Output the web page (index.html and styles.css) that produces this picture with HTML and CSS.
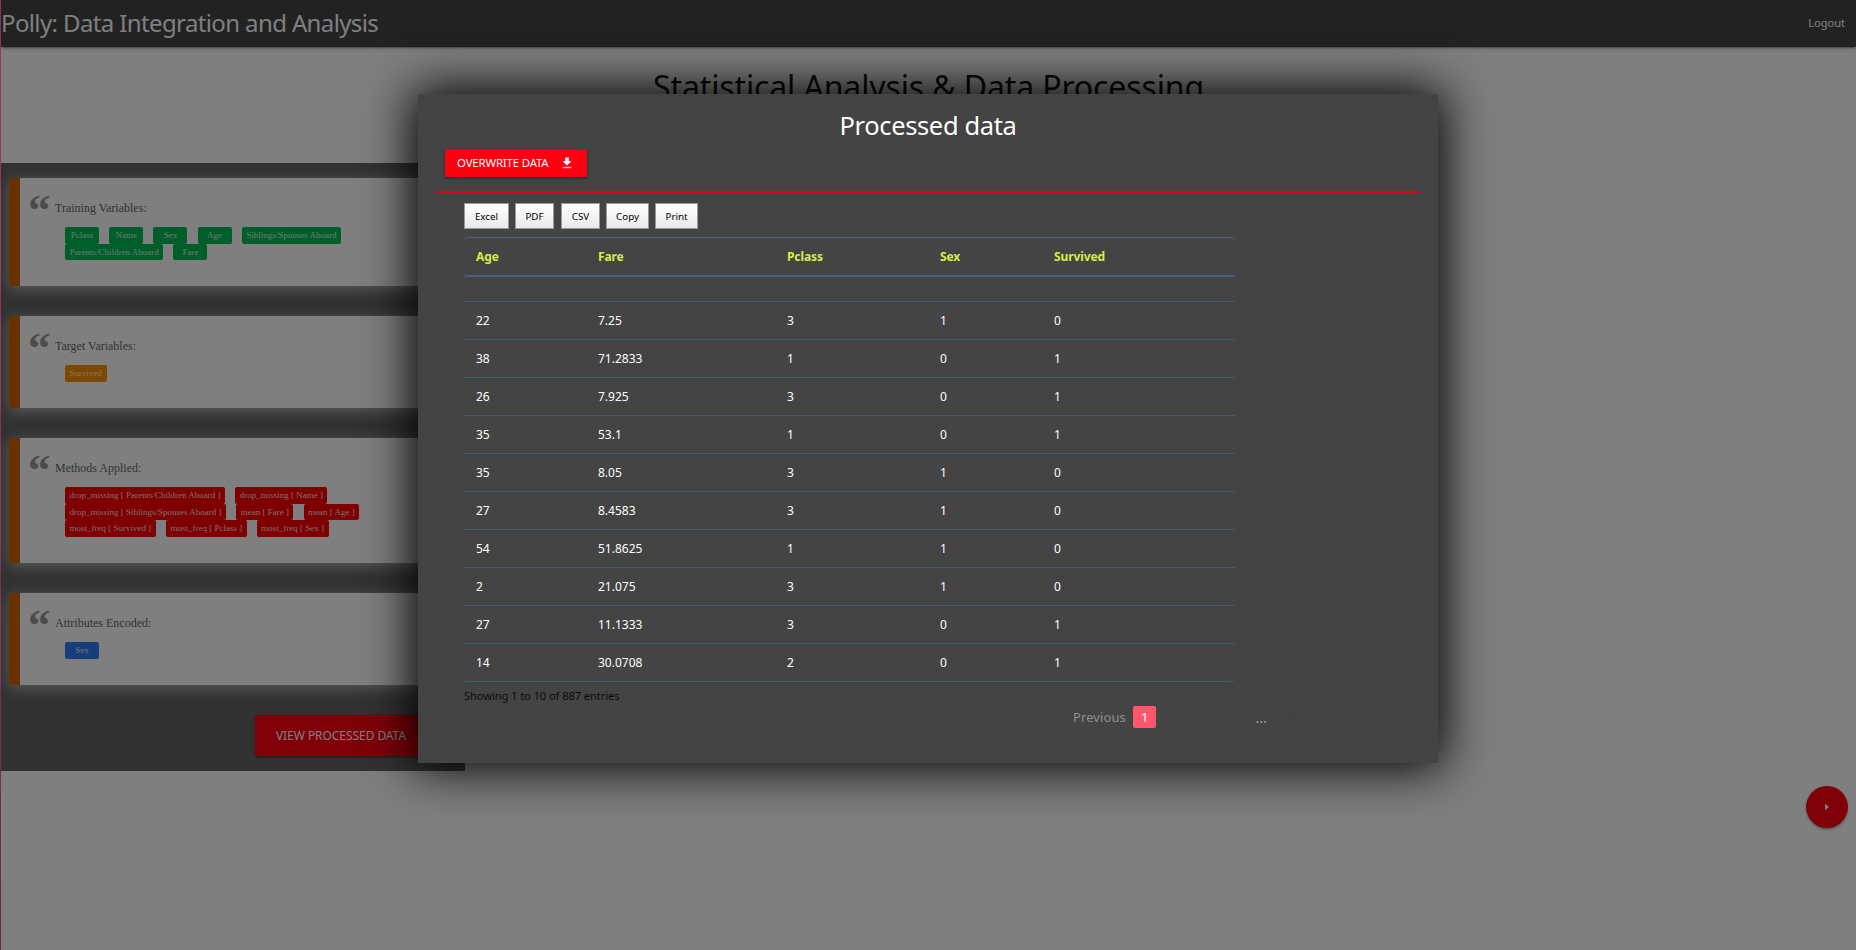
FILE: index.html
```
<!DOCTYPE html>
<html lang="en">
<head>
<meta charset="utf-8">
<title>Polly: Data Integration and Analysis</title>
<link rel="stylesheet" href="styles.css">
</head>
<body>
<div class="page">
  <header class="topbar">
    <h1 class="brand">Polly: Data Integration and Analysis</h1>
    <a class="logout">Logout</a>
  </header>
  <h2 class="page-title">Statistical Analysis &amp; Data Processing</h2>
  <section class="panel">
    <article class="card">
      <div class="card-head"><span class="quote">“</span><span>Training Variables:</span></div>
      <div class="tags green">
        <span>Pclass</span><span>Name</span><span>Sex</span><span>Age</span><span>Siblings/Spouses Aboard</span><span>Parents/Children Aboard</span><span>Fare</span>
      </div>
    </article>
    <article class="card">
      <div class="card-head"><span class="quote">“</span><span>Target Variables:</span></div>
      <div class="tags orange"><span>Survived</span></div>
    </article>
    <article class="card">
      <div class="card-head"><span class="quote">“</span><span>Methods Applied:</span></div>
      <div class="tags red">
        <span>drop_missing [ Parents/Children Aboard ]</span><span>drop_missing [ Name ]</span><span>drop_missing [ Siblings/Spouses Aboard ]</span><span>mean [ Fare ]</span><span>mean [ Age ]</span><span>most_freq [ Survived ]</span><span>most_freq [ Pclass ]</span><span>most_freq [ Sex ]</span>
      </div>
    </article>
    <article class="card">
      <div class="card-head"><span class="quote">“</span><span>Attributes Encoded:</span></div>
      <div class="tags blue"><span>Sex</span></div>
    </article>
    <button class="btn btn-large">VIEW PROCESSED DATA</button>
  </section>
  <button class="fab"><svg width="4" height="8" viewBox="0 0 4 8"><path d="M0 0.5 L4 4 L0 7.5 Z" fill="#fff"/></svg></button>
</div>
<div class="overlay"></div>
<div class="modal">
  <h3 class="modal-title">Processed data</h3>
  <button class="btn btn-small">OVERWRITE DATA
    <svg width="10" height="12" viewBox="0 0 10 12"><path d="M3.2 0.5h3.6v3.7H9.5L5 8.6L0.5 4.2h2.7z" fill="#fff"/><path d="M0.5 9.8h9v1.4h-9z" fill="#fff" opacity=".75"/></svg>
  </button>
  <div class="rule"></div>
  <div class="data">
    <div class="exports">
      <button>Excel</button><button>PDF</button><button>CSV</button><button>Copy</button><button>Print</button>
    </div>
    <table class="grid">
      <colgroup><col class="c-age"><col class="c-fare"><col class="c-class"><col class="c-sex"><col></colgroup>
      <thead>
        <tr><th>Age</th><th>Fare</th><th>Pclass</th><th>Sex</th><th>Survived</th></tr>
      </thead>
      <tbody>
        <tr class="blank"><td></td><td></td><td></td><td></td><td></td></tr>
        <tr><td>22</td><td>7.25</td><td>3</td><td>1</td><td>0</td></tr>
        <tr><td>38</td><td>71.2833</td><td>1</td><td>0</td><td>1</td></tr>
        <tr><td>26</td><td>7.925</td><td>3</td><td>0</td><td>1</td></tr>
        <tr><td>35</td><td>53.1</td><td>1</td><td>0</td><td>1</td></tr>
        <tr><td>35</td><td>8.05</td><td>3</td><td>1</td><td>0</td></tr>
        <tr><td>27</td><td>8.4583</td><td>3</td><td>1</td><td>0</td></tr>
        <tr><td>54</td><td>51.8625</td><td>1</td><td>1</td><td>0</td></tr>
        <tr><td>2</td><td>21.075</td><td>3</td><td>1</td><td>0</td></tr>
        <tr><td>27</td><td>11.1333</td><td>3</td><td>0</td><td>1</td></tr>
        <tr class="last"><td>14</td><td>30.0708</td><td>2</td><td>0</td><td>1</td></tr>
      </tbody>
    </table>
    <div class="info">Showing 1 to 10 of 887 entries</div>
    <nav class="pages">
      <span class="prev">Previous</span><span class="num current">1</span><span class="num">2</span><span class="num">3</span><span class="num">4</span><span class="num">5</span><span class="num dots">…</span><span class="wide">89</span><span>Next</span>
    </nav>
  </div>
</div>
</body>
</html>
```
FILE: styles.css
```
* { box-sizing: border-box; margin: 0; }
body {
  height: 950px;
  overflow: hidden;
  background: linear-gradient(#9c3a60, #82305f 50%, #6a2a52);
  padding-left: 1px;
  font-family: "Noto Sans", sans-serif;
}
button { font-family: inherit; border: 0; }
.page { position: relative; height: 950px; background: #fff; }
.topbar {
  display: flex;
  justify-content: space-between;
  align-items: center;
  height: 47px;
  padding: 0 11px 2px 0;
  background: #444;
  box-shadow: 0 2px 2px rgba(0, 0, 0, .14), 0 1px 5px rgba(0, 0, 0, .12), 0 3px 1px -2px rgba(0, 0, 0, .2);
}
.brand { font-size: 24px; font-weight: 400; letter-spacing: -.62px; line-height: 45px; color: #fff; }
.logout { font-size: 11.2px; letter-spacing: -.1px; color: #fff; }
.page-title {
  height: 116px;
  padding-top: 17px;
  font-size: 32px;
  font-weight: 400;
  letter-spacing: -.13px;
  line-height: 46px;
  text-align: center;
  color: #111;
}
.panel {
  display: flex;
  flex-direction: column;
  gap: 30px;
  width: 464px;
  height: 608px;
  padding: 15px 16px 15px 8px;
  background: #646464;
}
.card {
  padding: 0 0 26px 21px;
  border-left: 11px solid #cc6600;
  border-radius: 2px;
  background: #fff;
  box-shadow: 0 3px 14px rgba(255, 255, 255, .55);
  font-family: "Liberation Serif", serif;
}
.card-head {
  display: flex;
  height: 49px;
  padding-top: 22px;
  font-size: 12px;
  line-height: 16px;
  color: #666;
}
.quote {
  width: 28px;
  height: 16px;
  margin-left: -14px;
  padding-left: 1px;
  font-size: 45px;
  font-weight: 700;
  line-height: 20px;
  color: #999;
}
.tags { display: flex; flex-wrap: wrap; column-gap: 10.2px; width: 370px; padding-left: 24px; }
.tags span {
  min-width: 34px;
  height: 16.7px;
  padding: 0 4.5px;
  border-radius: 2px;
  font-size: 9px;
  line-height: 16px;
  text-align: center;
  color: rgba(255, 255, 255, .87);
}
.green span { background: #00bc54; }
.orange span { background: #ff9100; }
.red span { background: #ff0000; }
.blue span { background: #2f7df5; }
.btn {
  border-radius: 2px;
  background: #ff0011;
  color: #fff;
  box-shadow: 0 2px 2px rgba(0, 0, 0, .14), 0 1px 5px rgba(0, 0, 0, .12), 0 3px 1px -2px rgba(0, 0, 0, .2);
}
.btn-large {
  align-self: flex-end;
  width: 172px;
  height: 41px;
  margin-right: 22px;
  padding: 0;
  font-size: 12px;
  letter-spacing: -.06px;
}
.fab {
  position: absolute;
  right: 8px;
  top: 786px;
  display: grid;
  place-items: center;
  width: 42px;
  height: 42px;
  padding: 0;
  border-radius: 50%;
  background: #ff0011;
  box-shadow: 0 2px 2px rgba(0, 0, 0, .14), 0 1px 5px rgba(0, 0, 0, .12), 0 3px 1px -2px rgba(0, 0, 0, .2);
}
.overlay { position: absolute; inset: 0 0 0 1px; background: rgba(0, 0, 0, .5); }
.modal {
  position: absolute;
  left: 418px;
  top: 94px;
  width: 1020px;
  height: 669px;
  padding: 0 18px;
  border-radius: 2px 2px 0 0;
  background: #444;
  box-shadow: 0 0 50px 5px #000;
}
.modal-title {
  height: 56px;
  padding-top: 14px;
  font-size: 25.5px;
  font-weight: 400;
  letter-spacing: -.36px;
  line-height: 35px;
  text-align: center;
  color: #fff;
}
.btn-small {
  display: flex;
  align-items: center;
  gap: 13px;
  width: 142px;
  height: 27px;
  margin-left: 9px;
  padding: 0 12px 2px;
  font-size: 11.4px;
  letter-spacing: -.15px;
  white-space: nowrap;
}
.rule { width: 984px; height: 2px; margin-top: 14px; background: #dc0014; }
.data { padding: 10px 0 0 28px; }
.exports { display: flex; height: 34px; align-items: flex-start; }
.exports button {
  height: 26px;
  width: 45px;
  margin-right: 6px;
  padding: 0;
  border: 1px solid #999;
  background: linear-gradient(#fff, #e9e9e9);
  font-size: 9.8px;
  color: #000;
}
.exports button:nth-child(2), .exports button:nth-child(3) { width: 39px; }
.exports button:nth-child(2) { margin-right: 7px; }
.exports button:nth-child(n + 4) { width: 43px; }
.grid { width: 771px; table-layout: fixed; border-collapse: separate; border-spacing: 0; }
.c-age { width: 122px; }
.c-fare { width: 189px; }
.c-class { width: 153px; }
.c-sex { width: 114px; }
.grid th, .grid td { padding: 0 12px; text-align: left; font-size: 12px; }
.grid th {
  height: 39px;
  border-top: 1px solid #4a6187;
  border-bottom: 1px solid #4a6187;
  letter-spacing: -.1px;
  color: #d4ee45;
}
.grid td { height: 38px; border-top: 1px solid #44597a; color: #fff; }
.grid .blank td { height: 25px; border-top-color: #4a6187; }
.grid .last td { height: 39px; border-bottom: 1px solid #44597a; }
.grid th:first-child { border-top-left-radius: 4px; }
.grid th:last-child { border-top-right-radius: 4px; }
.grid .blank td:first-child { border-top-left-radius: 4px; }
.grid .blank td:last-child { border-top-right-radius: 4px; }
.grid .last td:first-child { border-bottom-left-radius: 4px; }
.grid .last td:last-child { border-bottom-right-radius: 4px; }
.info { height: 24px; padding-top: 6px; font-size: 11.2px; letter-spacing: -.11px; line-height: 16px; color: #0c0c0c; }
.pages { display: flex; padding-left: 609px; font-size: 13px; line-height: 22px; color: #424242; }
.prev { width: 60px; color: #8f8f8f; letter-spacing: .1px; }
.num { width: 23.3px; text-align: center; }
.current { border-radius: 2px; background: #ff566e; color: #fff; }
.dots { font-size: 14.5px; color: #a0a0a0; }
.wide { width: 41px; padding-left: 13px; }
```
